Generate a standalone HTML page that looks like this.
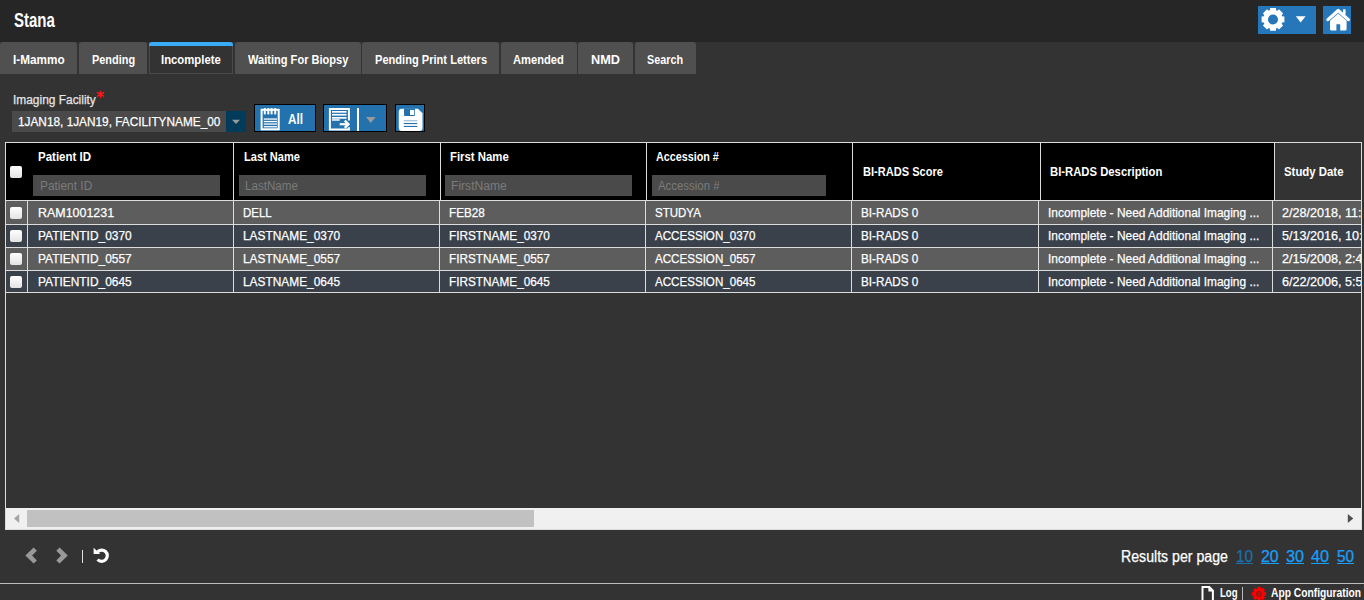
<!DOCTYPE html>
<html><head><meta charset="utf-8"><style>
html,body{margin:0;padding:0;}
body{width:1364px;height:600px;position:relative;overflow:hidden;background:#333333;font-family:"Liberation Sans",sans-serif;}
.r{position:absolute;}
.t{position:absolute;white-space:pre;line-height:1;transform-origin:0 0;}
</style></head><body>
<div class="r" style="left:0px;top:0px;width:1364px;height:42px;background:#262626;"></div>
<div class="t" style="left:14.00px;top:11px;font-size:19.8px;font-weight:bold;color:#fff;transform:scaleX(0.7585);">Stana</div>
<div class="r" style="left:1258px;top:6px;width:58px;height:28px;background:#2677b9;"></div>
<div class="r" style="left:1323px;top:6px;width:28px;height:28px;background:#2677b9;"></div>
<div class="r" style="left:0px;top:42px;width:77px;height:32px;background:#505050;border-radius:3px 3px 0 0"></div>
<div class="t" style="left:13.20px;top:53px;font-size:13.4px;font-weight:bold;color:#fff;transform:scaleX(0.8772);">I-Mammo</div>
<div class="r" style="left:79px;top:42px;width:68px;height:32px;background:#505050;border-radius:3px 3px 0 0"></div>
<div class="t" style="left:91.50px;top:53px;font-size:13.4px;font-weight:bold;color:#fff;transform:scaleX(0.8153);">Pending</div>
<div class="r" style="left:149px;top:42px;width:84px;height:32px;background:#333;box-sizing:border-box;border:1px solid #4a4a4a;border-top:none;border-radius:3px 3px 0 0"></div>
<div class="r" style="left:149px;top:42px;width:84px;height:4px;background:#38acf4;border-radius:3px 3px 0 0"></div>
<div class="t" style="left:161.00px;top:53px;font-size:13.4px;font-weight:bold;color:#fff;transform:scaleX(0.8452);">Incomplete</div>
<div class="r" style="left:235px;top:42px;width:126px;height:32px;background:#505050;border-radius:3px 3px 0 0"></div>
<div class="t" style="left:247.70px;top:53px;font-size:13.4px;font-weight:bold;color:#fff;transform:scaleX(0.8264);">Waiting For Biopsy</div>
<div class="r" style="left:362px;top:42px;width:137px;height:32px;background:#505050;border-radius:3px 3px 0 0"></div>
<div class="t" style="left:374.50px;top:53px;font-size:13.4px;font-weight:bold;color:#fff;transform:scaleX(0.8278);">Pending Print Letters</div>
<div class="r" style="left:501px;top:42px;width:76px;height:32px;background:#505050;border-radius:3px 3px 0 0"></div>
<div class="t" style="left:513.00px;top:53px;font-size:13.4px;font-weight:bold;color:#fff;transform:scaleX(0.8323);">Amended</div>
<div class="r" style="left:578px;top:42px;width:55px;height:32px;background:#505050;border-radius:3px 3px 0 0"></div>
<div class="t" style="left:590.70px;top:53px;font-size:13.4px;font-weight:bold;color:#fff;transform:scaleX(0.9513);">NMD</div>
<div class="r" style="left:635px;top:42px;width:61px;height:32px;background:#505050;border-radius:3px 3px 0 0"></div>
<div class="t" style="left:647.00px;top:53px;font-size:13.4px;font-weight:bold;color:#fff;transform:scaleX(0.8056);">Search</div>
<div class="t" style="left:12.50px;top:94px;font-size:12.5px;font-weight:normal;color:#e6e6e6;transform:scaleX(0.9538);-webkit-text-stroke:0.25px currentColor;">Imaging Facility</div>
<div class="r" style="left:12px;top:111px;width:214px;height:21px;background:#4a4a4a;"></div>
<div class="r" style="left:226px;top:111px;width:20px;height:21px;background:#033b5b;"></div>
<div class="t" style="left:18.30px;top:115px;font-size:13.2px;font-weight:normal;color:#fff;transform:scaleX(0.8965);-webkit-text-stroke:0.25px currentColor;">1JAN18, 1JAN19, FACILITYNAME_00</div>
<div class="r" style="left:254px;top:104px;width:62px;height:28px;background:#2372ae;box-sizing:border-box;border:1px solid #000"></div>
<div class="r" style="left:323px;top:104px;width:64px;height:28px;background:#2372ae;box-sizing:border-box;border:1px solid #000"></div>
<div class="r" style="left:395px;top:104px;width:30px;height:28px;background:#2372ae;box-sizing:border-box;border:1px solid #000"></div>
<div class="t" style="left:288.00px;top:111px;font-size:15.3px;font-weight:bold;color:#fff;transform:scaleX(0.7659);">All</div>
<div class="r" style="left:357px;top:108px;width:2px;height:23px;background:#fff;"></div>
<div class="r" style="left:5px;top:142px;width:1357px;height:388px;background:transparent;box-sizing:border-box;border:1px solid #dcdcdc"></div>
<div class="r" style="left:6px;top:143px;width:1355px;height:57px;background:#000;"></div>
<div class="r" style="left:1275px;top:143px;width:86px;height:57px;background:#333;"></div>
<div class="r" style="left:233px;top:143px;width:1px;height:57px;background:#dcdcdc;"></div>
<div class="r" style="left:440px;top:143px;width:1px;height:57px;background:#dcdcdc;"></div>
<div class="r" style="left:646px;top:143px;width:1px;height:57px;background:#dcdcdc;"></div>
<div class="r" style="left:852px;top:143px;width:1px;height:57px;background:#dcdcdc;"></div>
<div class="r" style="left:1040px;top:143px;width:1px;height:57px;background:#dcdcdc;"></div>
<div class="r" style="left:1274px;top:143px;width:1px;height:57px;background:#dcdcdc;"></div>
<div class="r" style="left:6px;top:200px;width:1355px;height:1px;background:#dcdcdc;"></div>
<div class="r" style="left:6px;top:201px;width:1355px;height:23px;background:#5d5d5d;"></div>
<div class="r" style="left:6px;top:224px;width:1355px;height:1px;background:#dcdcdc;"></div>
<div class="r" style="left:6px;top:225px;width:1355px;height:22px;background:#3a414b;"></div>
<div class="r" style="left:6px;top:247px;width:1355px;height:1px;background:#dcdcdc;"></div>
<div class="r" style="left:6px;top:248px;width:1355px;height:22px;background:#5d5d5d;"></div>
<div class="r" style="left:6px;top:270px;width:1355px;height:1px;background:#dcdcdc;"></div>
<div class="r" style="left:6px;top:271px;width:1355px;height:21px;background:#3a414b;"></div>
<div class="r" style="left:6px;top:292px;width:1355px;height:1px;background:#dcdcdc;"></div>
<div class="r" style="left:27px;top:201px;width:1px;height:92px;background:#dcdcdc;"></div>
<div class="r" style="left:233px;top:201px;width:1px;height:92px;background:#dcdcdc;"></div>
<div class="r" style="left:439px;top:201px;width:1px;height:92px;background:#dcdcdc;"></div>
<div class="r" style="left:645px;top:201px;width:1px;height:92px;background:#dcdcdc;"></div>
<div class="r" style="left:851px;top:201px;width:1px;height:92px;background:#dcdcdc;"></div>
<div class="r" style="left:1038px;top:201px;width:1px;height:92px;background:#dcdcdc;"></div>
<div class="r" style="left:1272px;top:201px;width:1px;height:92px;background:#dcdcdc;"></div>
<div class="r" style="left:10px;top:166px;width:12px;height:12px;border-radius:2px;background:linear-gradient(#ffffff,#e3e3e3)"></div>
<div class="r" style="left:10px;top:207px;width:12px;height:12px;border-radius:2px;background:linear-gradient(#ffffff,#e3e3e3)"></div>
<div class="r" style="left:10px;top:230px;width:12px;height:12px;border-radius:2px;background:linear-gradient(#ffffff,#e3e3e3)"></div>
<div class="r" style="left:10px;top:253px;width:12px;height:12px;border-radius:2px;background:linear-gradient(#ffffff,#e3e3e3)"></div>
<div class="r" style="left:10px;top:276px;width:12px;height:12px;border-radius:2px;background:linear-gradient(#ffffff,#e3e3e3)"></div>
<div class="t" style="left:38.00px;top:150px;font-size:13px;font-weight:bold;color:#fff;transform:scaleX(0.8844);">Patient ID</div>
<div class="t" style="left:243.50px;top:150px;font-size:13px;font-weight:bold;color:#fff;transform:scaleX(0.8513);">Last Name</div>
<div class="t" style="left:450.00px;top:150px;font-size:13px;font-weight:bold;color:#fff;transform:scaleX(0.8749);">First Name</div>
<div class="t" style="left:655.80px;top:150px;font-size:13px;font-weight:bold;color:#fff;transform:scaleX(0.8279);">Accession #</div>
<div class="t" style="left:862.50px;top:165px;font-size:13px;font-weight:bold;color:#fff;transform:scaleX(0.8517);">BI-RADS Score</div>
<div class="t" style="left:1049.70px;top:165px;font-size:13px;font-weight:bold;color:#fff;transform:scaleX(0.8686);">BI-RADS Description</div>
<div class="t" style="left:1284.40px;top:165px;font-size:13px;font-weight:bold;color:#fff;transform:scaleX(0.8760);">Study Date</div>
<div class="r" style="left:33px;top:175px;width:187px;height:21px;background:#4a4a4a;"></div>
<div class="r" style="left:239px;top:175px;width:187px;height:21px;background:#4a4a4a;"></div>
<div class="r" style="left:445px;top:175px;width:187px;height:21px;background:#4a4a4a;"></div>
<div class="r" style="left:652px;top:175px;width:174px;height:21px;background:#4a4a4a;"></div>
<div class="t" style="left:39.50px;top:180px;font-size:12.5px;font-weight:normal;color:#7b7b7b;transform:scaleX(0.9513);">Patient ID</div>
<div class="t" style="left:245.00px;top:180px;font-size:12.5px;font-weight:normal;color:#7b7b7b;transform:scaleX(0.9298);">LastName</div>
<div class="t" style="left:451.00px;top:180px;font-size:12.5px;font-weight:normal;color:#7b7b7b;transform:scaleX(0.9683);">FirstName</div>
<div class="t" style="left:657.50px;top:180px;font-size:12.5px;font-weight:normal;color:#7b7b7b;transform:scaleX(0.9128);">Accession #</div>
<div class="t" style="left:37.50px;top:207px;font-size:12.6px;font-weight:normal;color:#fff;transform:scaleX(0.9877);-webkit-text-stroke:0.25px currentColor;">RAM1001231</div>
<div class="t" style="left:242.80px;top:207px;font-size:12.6px;font-weight:normal;color:#fff;transform:scaleX(0.9111);-webkit-text-stroke:0.25px currentColor;">DELL</div>
<div class="t" style="left:449.00px;top:207px;font-size:12.6px;font-weight:normal;color:#fff;transform:scaleX(0.9326);-webkit-text-stroke:0.25px currentColor;">FEB28</div>
<div class="t" style="left:654.80px;top:207px;font-size:12.6px;font-weight:normal;color:#fff;transform:scaleX(0.9141);-webkit-text-stroke:0.25px currentColor;">STUDYA</div>
<div class="t" style="left:860.80px;top:207px;font-size:12.6px;font-weight:normal;color:#fff;transform:scaleX(0.9284);-webkit-text-stroke:0.25px currentColor;">BI-RADS 0</div>
<div class="t" style="left:1048.00px;top:207px;font-size:12.6px;font-weight:normal;color:#fff;transform:scaleX(0.9465);-webkit-text-stroke:0.25px currentColor;">Incomplete - Need Additional Imaging ...</div>
<div class="r" style="left:1273px;top:201px;width:88px;height:23px;overflow:hidden">
<div class="t" style="left:9.00px;top:6px;font-size:12.6px;font-weight:normal;color:#fff;-webkit-text-stroke:0.25px currentColor;">2/28/2018, 11:</div>
</div>
<div class="t" style="left:37.50px;top:230px;font-size:12.6px;font-weight:normal;color:#fff;transform:scaleX(0.9467);-webkit-text-stroke:0.25px currentColor;">PATIENTID_0370</div>
<div class="t" style="left:242.80px;top:230px;font-size:12.6px;font-weight:normal;color:#fff;transform:scaleX(0.9442);-webkit-text-stroke:0.25px currentColor;">LASTNAME_0370</div>
<div class="t" style="left:449.00px;top:230px;font-size:12.6px;font-weight:normal;color:#fff;transform:scaleX(0.9364);-webkit-text-stroke:0.25px currentColor;">FIRSTNAME_0370</div>
<div class="t" style="left:654.80px;top:230px;font-size:12.6px;font-weight:normal;color:#fff;transform:scaleX(0.9200);-webkit-text-stroke:0.25px currentColor;">ACCESSION_0370</div>
<div class="t" style="left:860.80px;top:230px;font-size:12.6px;font-weight:normal;color:#fff;transform:scaleX(0.9284);-webkit-text-stroke:0.25px currentColor;">BI-RADS 0</div>
<div class="t" style="left:1048.00px;top:230px;font-size:12.6px;font-weight:normal;color:#fff;transform:scaleX(0.9465);-webkit-text-stroke:0.25px currentColor;">Incomplete - Need Additional Imaging ...</div>
<div class="r" style="left:1273px;top:225px;width:88px;height:22px;overflow:hidden">
<div class="t" style="left:9.00px;top:5px;font-size:12.6px;font-weight:normal;color:#fff;-webkit-text-stroke:0.25px currentColor;">5/13/2016, 10:</div>
</div>
<div class="t" style="left:37.50px;top:253px;font-size:12.6px;font-weight:normal;color:#fff;transform:scaleX(0.9467);-webkit-text-stroke:0.25px currentColor;">PATIENTID_0557</div>
<div class="t" style="left:242.80px;top:253px;font-size:12.6px;font-weight:normal;color:#fff;transform:scaleX(0.9442);-webkit-text-stroke:0.25px currentColor;">LASTNAME_0557</div>
<div class="t" style="left:449.00px;top:253px;font-size:12.6px;font-weight:normal;color:#fff;transform:scaleX(0.9364);-webkit-text-stroke:0.25px currentColor;">FIRSTNAME_0557</div>
<div class="t" style="left:654.80px;top:253px;font-size:12.6px;font-weight:normal;color:#fff;transform:scaleX(0.9200);-webkit-text-stroke:0.25px currentColor;">ACCESSION_0557</div>
<div class="t" style="left:860.80px;top:253px;font-size:12.6px;font-weight:normal;color:#fff;transform:scaleX(0.9284);-webkit-text-stroke:0.25px currentColor;">BI-RADS 0</div>
<div class="t" style="left:1048.00px;top:253px;font-size:12.6px;font-weight:normal;color:#fff;transform:scaleX(0.9465);-webkit-text-stroke:0.25px currentColor;">Incomplete - Need Additional Imaging ...</div>
<div class="r" style="left:1273px;top:248px;width:88px;height:22px;overflow:hidden">
<div class="t" style="left:9.00px;top:5px;font-size:12.6px;font-weight:normal;color:#fff;-webkit-text-stroke:0.25px currentColor;">2/15/2008, 2:4</div>
</div>
<div class="t" style="left:37.50px;top:276px;font-size:12.6px;font-weight:normal;color:#fff;transform:scaleX(0.9467);-webkit-text-stroke:0.25px currentColor;">PATIENTID_0645</div>
<div class="t" style="left:242.80px;top:276px;font-size:12.6px;font-weight:normal;color:#fff;transform:scaleX(0.9442);-webkit-text-stroke:0.25px currentColor;">LASTNAME_0645</div>
<div class="t" style="left:449.00px;top:276px;font-size:12.6px;font-weight:normal;color:#fff;transform:scaleX(0.9364);-webkit-text-stroke:0.25px currentColor;">FIRSTNAME_0645</div>
<div class="t" style="left:654.80px;top:276px;font-size:12.6px;font-weight:normal;color:#fff;transform:scaleX(0.9200);-webkit-text-stroke:0.25px currentColor;">ACCESSION_0645</div>
<div class="t" style="left:860.80px;top:276px;font-size:12.6px;font-weight:normal;color:#fff;transform:scaleX(0.9284);-webkit-text-stroke:0.25px currentColor;">BI-RADS 0</div>
<div class="t" style="left:1048.00px;top:276px;font-size:12.6px;font-weight:normal;color:#fff;transform:scaleX(0.9465);-webkit-text-stroke:0.25px currentColor;">Incomplete - Need Additional Imaging ...</div>
<div class="r" style="left:1273px;top:271px;width:88px;height:21px;overflow:hidden">
<div class="t" style="left:9.00px;top:5px;font-size:12.6px;font-weight:normal;color:#fff;-webkit-text-stroke:0.25px currentColor;">6/22/2006, 5:5</div>
</div>
<div class="r" style="left:6px;top:508px;width:1355px;height:21px;background:#f0f0f0;"></div>
<div class="r" style="left:27px;top:510px;width:507px;height:17px;background:#c1c1c1;"></div>
<div class="r" style="left:81.5px;top:550px;width:1.5px;height:13px;background:#e0e0e0;"></div>
<div class="t" style="left:1120.80px;top:549px;font-size:16px;font-weight:normal;color:#fff;transform:scaleX(0.8838);-webkit-text-stroke:0.25px currentColor;">Results per page</div>
<div class="t" style="left:1236.00px;top:549px;font-size:15.8px;font-weight:normal;color:#1b70aa;transform:scaleX(0.9693);-webkit-text-stroke:0.25px currentColor;">10</div>
<div class="r" style="left:1236px;top:563px;width:17px;height:1px;background:#1b70aa;"></div>
<div class="t" style="left:1261.00px;top:549px;font-size:15.8px;font-weight:normal;color:#18a0fc;-webkit-text-stroke:0.25px currentColor;">20</div>
<div class="r" style="left:1261px;top:563px;width:17.5px;height:1px;background:#18a0fc;"></div>
<div class="t" style="left:1286.00px;top:549px;font-size:15.8px;font-weight:normal;color:#18a0fc;transform:scaleX(1.0263);-webkit-text-stroke:0.25px currentColor;">30</div>
<div class="r" style="left:1286px;top:563px;width:18px;height:1px;background:#18a0fc;"></div>
<div class="t" style="left:1311.00px;top:549px;font-size:15.8px;font-weight:normal;color:#18a0fc;transform:scaleX(1.0263);-webkit-text-stroke:0.25px currentColor;">40</div>
<div class="r" style="left:1311px;top:563px;width:18px;height:1px;background:#18a0fc;"></div>
<div class="t" style="left:1337.00px;top:549px;font-size:15.8px;font-weight:normal;color:#18a0fc;transform:scaleX(0.9693);-webkit-text-stroke:0.25px currentColor;">50</div>
<div class="r" style="left:1337px;top:563px;width:17px;height:1px;background:#18a0fc;"></div>
<div class="r" style="left:0px;top:583px;width:1364px;height:1px;background:#bdbdbd;"></div>
<div class="t" style="left:1219.60px;top:586px;font-size:13px;font-weight:bold;color:#fff;transform:scaleX(0.7378);">Log</div>
<div class="r" style="left:1242px;top:587px;width:1px;height:13px;background:#bbb;"></div>
<div class="t" style="left:1271.00px;top:586px;font-size:13px;font-weight:bold;color:#fff;transform:scaleX(0.7890);">App Configuration</div>
<svg class="r" style="left:0;top:0" width="1364" height="600" viewBox="0 0 1364 600"><g fill="#fff"><path d="M1269.7 13.45L1270.1 8.049999999999999H1275.9L1276.3 13.45Z" transform="rotate(0 1273 19.45)"/><path d="M1269.7 13.45L1270.1 8.049999999999999H1275.9L1276.3 13.45Z" transform="rotate(45 1273 19.45)"/><path d="M1269.7 13.45L1270.1 8.049999999999999H1275.9L1276.3 13.45Z" transform="rotate(90 1273 19.45)"/><path d="M1269.7 13.45L1270.1 8.049999999999999H1275.9L1276.3 13.45Z" transform="rotate(135 1273 19.45)"/><path d="M1269.7 13.45L1270.1 8.049999999999999H1275.9L1276.3 13.45Z" transform="rotate(180 1273 19.45)"/><path d="M1269.7 13.45L1270.1 8.049999999999999H1275.9L1276.3 13.45Z" transform="rotate(225 1273 19.45)"/><path d="M1269.7 13.45L1270.1 8.049999999999999H1275.9L1276.3 13.45Z" transform="rotate(270 1273 19.45)"/><path d="M1269.7 13.45L1270.1 8.049999999999999H1275.9L1276.3 13.45Z" transform="rotate(315 1273 19.45)"/><circle cx="1273" cy="19.45" r="9.7"/></g><circle cx="1273" cy="19.45" r="5" fill="#2677b9"/><path d="M1295.8 16.3H1305.6L1300.7 22.6Z" fill="#fff"/><path d="M1327.9 19.6L1338.2 10.5L1348.4 19.6" stroke="#fff" stroke-width="3.2" fill="none" stroke-linecap="round" stroke-linejoin="round"/><rect x="1343" y="9.2" width="2.6" height="5.5" rx="0.8" fill="#fff"/><path d="M1330 20.8L1338.2 13.6L1346.6 20.8V29Q1346.6 30.5 1345.1 30.5H1340.2V24.2H1336.4V30.5H1331.5Q1330 30.5 1330 29Z" fill="#fff"/><g stroke="#ff1a1a" stroke-width="1.5" stroke-linecap="round"><path d="M100.5 91.4V97.4"/><path d="M97.4 92.6L103.6 96.2"/><path d="M97.4 96.2L103.6 92.6"/></g><path d="M232 119.8H240L236 124Z" fill="#9a9a9a"/><rect x="261.6" y="109.8" width="17.1" height="19.5" fill="none" stroke="#fff" stroke-width="2"/><g fill="#fff"><rect x="263.8" y="108.1" width="2" height="6.3"/><rect x="267.3" y="108.1" width="2" height="6.3"/><rect x="270.6" y="108.1" width="2" height="6.3"/><rect x="274.2" y="108.1" width="2" height="6.3"/><rect x="263.8" y="118.4" width="13.2" height="1.3"/><rect x="263.8" y="120.9" width="13.2" height="1.3"/><rect x="263.8" y="123.4" width="13.2" height="1.3"/><rect x="263.8" y="126.1" width="13.2" height="1.3"/></g><path d="M348.9 120.4V109.1H329.9V129.6H348.9V127.2" fill="none" stroke="#fff" stroke-width="2"/><g fill="#fff"><rect x="332" y="111" width="14.5" height="1.7"/><rect x="332" y="113.9" width="14.5" height="1.7"/><rect x="332" y="117" width="14.5" height="1.7"/><rect x="332" y="119.2" width="7.7" height="1.5"/></g><path d="M339.7 124.2H348.3" stroke="#fff" stroke-width="2.2" fill="none"/><path d="M344.8 120.6L348.4 124.2L344.8 127.8" stroke="#fff" stroke-width="2.4" fill="none"/><path d="M366 117H375.6L370.8 123Z" fill="#9a9a9a"/><path d="M401.75 108.75H418L422.5 113.25V128Q422.5 130.9 419.5 130.9H401.75Q398.75 130.9 398.75 128V111.75Q398.75 108.75 401.75 108.75Z" fill="#fff"/><path d="M404 108.5H415V115Q415 116 414 116H405Q404 116 404 115Z" fill="#2372ae"/><rect x="410" y="110" width="4.25" height="5" fill="#fff"/><g fill="#2372ae"><rect x="403.75" y="120.2" width="13.5" height="1.1" opacity="0.5"/><rect x="403.75" y="123" width="13.5" height="1.1"/><rect x="403.75" y="125.9" width="13.5" height="1.1"/></g><path d="M19.2 514V523L14 518.5Z" fill="#a3a3a3"/><path d="M1347.8 514V523L1353.3 518.5Z" fill="#505050"/><path d="M25.4 555.6L33.6 547.6L36.9 550.8L32.1 555.6L36.9 560.4L33.6 563.6Z" fill="#999"/><path d="M67.8 555.6L59.6 547.6L56.3 550.8L61.1 555.6L56.3 560.4L59.6 563.6Z" fill="#999"/><path d="M97.4 552.1A5.6 5.6 0 1 1 97.6 559.5" stroke="#fff" stroke-width="3.2" fill="none"/><path d="M93.6 547.8V553.9H100.2Z" fill="#fff"/><path d="M1202.5 587H1209.3L1212.9 590.6V601H1202.5Z" fill="none" stroke="#fff" stroke-width="2"/><path d="M1208.4 586L1213.9 591.5H1208.4Z" fill="#fff"/><g fill="#ff0000"><rect x="1257.2" y="586.9" width="3.6" height="3.6" transform="rotate(0 1259 593.9)"/><rect x="1257.2" y="586.9" width="3.6" height="3.6" transform="rotate(45 1259 593.9)"/><rect x="1257.2" y="586.9" width="3.6" height="3.6" transform="rotate(90 1259 593.9)"/><rect x="1257.2" y="586.9" width="3.6" height="3.6" transform="rotate(135 1259 593.9)"/><rect x="1257.2" y="586.9" width="3.6" height="3.6" transform="rotate(180 1259 593.9)"/><rect x="1257.2" y="586.9" width="3.6" height="3.6" transform="rotate(225 1259 593.9)"/><rect x="1257.2" y="586.9" width="3.6" height="3.6" transform="rotate(270 1259 593.9)"/><rect x="1257.2" y="586.9" width="3.6" height="3.6" transform="rotate(315 1259 593.9)"/><circle cx="1259" cy="593.9" r="5.4"/></g><circle cx="1259" cy="593.9" r="3" fill="#9a1515"/><circle cx="1259" cy="593.9" r="1.6" fill="#c01010"/></svg>
</body></html>
